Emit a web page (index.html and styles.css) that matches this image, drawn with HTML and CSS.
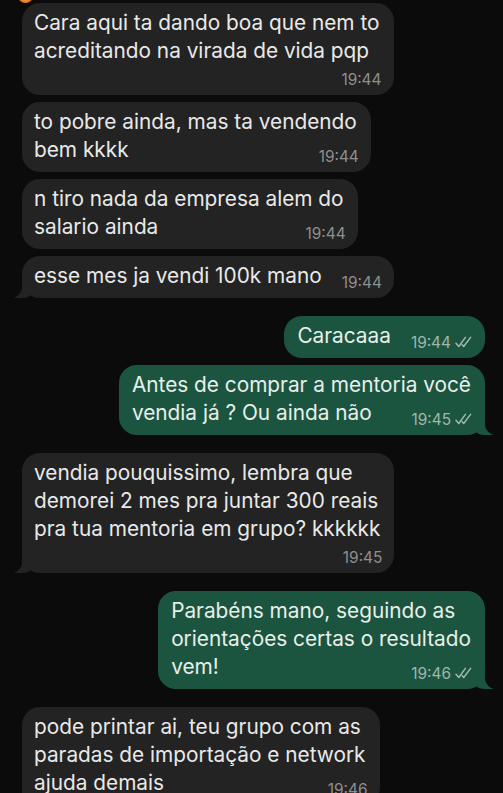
FILE: index.html
```html
<!DOCTYPE html>
<html lang="pt-BR">
<head>
  <meta charset="UTF-8" />
  <meta name="viewport" content="width=device-width, initial-scale=1.0"/>
  <title>Conversa</title>
  <link rel="stylesheet" href="styles.css">
</head>
<body>
  <div class="chat">
    <span class="reaction"></span>

    <div class="bubble in">
      Cara aqui ta dando boa que nem to<br>acreditando na virada de vida pqp
      <span class="time below">19:44</span>
    </div>

    <div class="bubble in">
      to pobre ainda, mas ta vendendo<br>bem kkkk<span class="time">19:44</span>
    </div>

    <div class="bubble in">
      n tiro nada da empresa alem do<br>salario ainda<span class="time">19:44</span>
    </div>

    <div class="bubble in tail">
      esse mes ja vendi 100k mano<span class="time">19:44</span>
    </div>

    <div class="bubble out first">
      Caracaaa<span class="time">19:44<svg class="ticks" viewBox="0 0 18 12"><path d="M1 7.2l2.8 3.3L10.4 1.4M7.2 8.8l1.5 1.7L15.6 1.4"/></svg></span>
    </div>

    <div class="bubble out tail">
      Antes de comprar a mentoria você<br>vendia já ? Ou ainda não<span class="time">19:45<svg class="ticks" viewBox="0 0 18 12"><path d="M1 7.2l2.8 3.3L10.4 1.4M7.2 8.8l1.5 1.7L15.6 1.4"/></svg></span>
    </div>

    <div class="bubble in tail first">
      vendia pouquissimo, lembra que<br>demorei 2 mes pra juntar 300 reais<br>pra tua mentoria em grupo? kkkkkk
      <span class="time below">19:45</span>
    </div>

    <div class="bubble out tail first">
      Parabéns mano, seguindo as<br>orientações certas o resultado<br>vem!<span class="time">19:46<svg class="ticks" viewBox="0 0 18 12"><path d="M1 7.2l2.8 3.3L10.4 1.4M7.2 8.8l1.5 1.7L15.6 1.4"/></svg></span>
    </div>

    <div class="bubble in tail first">
      pode printar ai, teu grupo com as<br>paradas de importação e network<br>ajuda demais<span class="time">19:46</span>
    </div>
  </div>
</body>
</html>
```

FILE: styles.css
```css
body {
  margin: 0;
  background-color: #0b0b0b;
  font-family: Inter, "Noto Sans", sans-serif;
  height: 793px;
  overflow: hidden;
}
.chat {
  position: relative;
  display: flex;
  flex-direction: column;
  padding: 3px 18px 0 22px;
}
.reaction {
  position: absolute;
  top: -11px;
  left: 18px;
  width: 15px;
  height: 14px;
  border-radius: 50%;
  background: radial-gradient(circle at 50% 70%, #f3a13a, #c9521c 70%);
}
.bubble {
  position: relative;
  padding: 6px 14px 6px 12px;
  border-radius: 18px;
  font-size: 20.8px;
  line-height: 28px;
  white-space: nowrap;
  margin-top: 7px;
}
.bubble:first-of-type {
  margin-top: 0;
}
.bubble.first {
  margin-top: 18px;
}
.in {
  align-self: flex-start;
  background-color: #232323;
  color: #e9e9e9;
}
.out {
  align-self: flex-end;
  background-color: #1b553f;
  color: #e8efeb;
  padding-left: 13px;
}
.time {
  float: right;
  margin: 12px -2px 0 20px;
  font-size: 15.4px;
  line-height: 18px;
  color: #8f8f8f;
}
.out .time {
  color: #9fb8ac;
}
.time.below {
  float: none;
  display: block;
  text-align: right;
  margin: 6px -2px 0 0;
}
.ticks {
  width: 18px;
  height: 12px;
  margin-left: 4px;
  fill: none;
  stroke: #9fb8ac;
  stroke-width: 1.5;
  stroke-linecap: round;
  stroke-linejoin: round;
}

/* bubble tails */
.tail::before,
.tail::after {
  content: "";
  position: absolute;
  bottom: 0;
  height: 16px;
}
.in.tail::before {
  left: -8px;
  width: 22px;
  background: #232323;
  border-bottom-right-radius: 14px 12px;
}
.in.tail::after {
  left: -22px;
  width: 22px;
  background: #0b0b0b;
  border-bottom-right-radius: 11px;
}
.out.tail::before {
  right: -8px;
  width: 22px;
  background: #1b553f;
  border-bottom-left-radius: 14px 12px;
}
.out.tail::after {
  right: -22px;
  width: 22px;
  background: #0b0b0b;
  border-bottom-left-radius: 11px;
}
```
